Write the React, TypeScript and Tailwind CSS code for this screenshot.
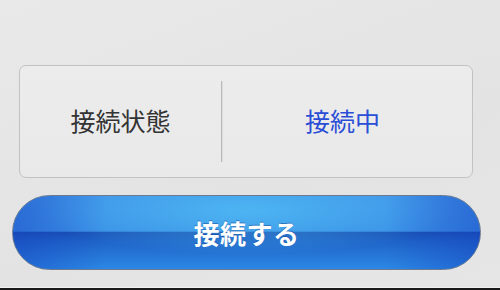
import React from "react";

export default function App() {
  return (
    <div
      className="w-[500px] h-[290px] flex flex-col bg-[linear-gradient(160deg,#e9e9ea_0%,#e3e3e4_60%,#e6e6e7_100%)] overflow-hidden"
      style={{ fontFamily: '"Noto Sans CJK JP", "Noto Sans", sans-serif' }}
    >
      <div className="flex-1 flex flex-col pt-[65px]">
        <div className="mx-[19px] w-[454px] h-[113px] rounded-[7px] border border-[#c2c2c4] bg-[linear-gradient(180deg,#ececed_0%,#e9e9ea_100%)] flex items-center">
          <div className="w-[201px] h-full flex items-center justify-center text-[25px] text-[#333333] leading-none pb-[2px]">
            接続状態
          </div>
          <div className="w-[2px] h-[81px] bg-[#b9b9bb] border-r border-[#dcdcdd]" />
          <div className="flex-1 h-full flex items-center justify-center text-[25px] text-[#2a4fd6] leading-none pb-[2px] pr-[10px]">
            接続中
          </div>
        </div>
        <div className="mt-[17px] mx-[12px] w-[469px] h-[75px] rounded-full border border-[#6b7a8e] relative overflow-hidden bg-[linear-gradient(180deg,#3f93e8_0%,#3a8fe6_48%,#1a52b6_50%,#1f64c8_62%,#2c88e4_100%)] flex items-center justify-center">
          <div className="absolute inset-0 bg-[radial-gradient(ellipse_45%_60%_at_50%_20%,rgba(90,210,250,0.55),rgba(90,210,250,0)_100%)]" />
          <div className="absolute inset-0 bg-[linear-gradient(90deg,rgba(20,60,190,0.45)_0%,rgba(20,60,190,0)_20%,rgba(20,60,190,0)_80%,rgba(20,60,190,0.45)_100%)]" />
          <span className="relative text-white font-bold text-[26px] leading-none tracking-[0.5px] [text-shadow:0_-1px_0_rgba(0,40,120,0.4)]">
            接続する
          </span>
        </div>
      </div>
      <div className="h-[1px] bg-[#f2f2f2]" />
      <div className="h-[2px] bg-[#1a1a1a]" />
    </div>
  );
}
